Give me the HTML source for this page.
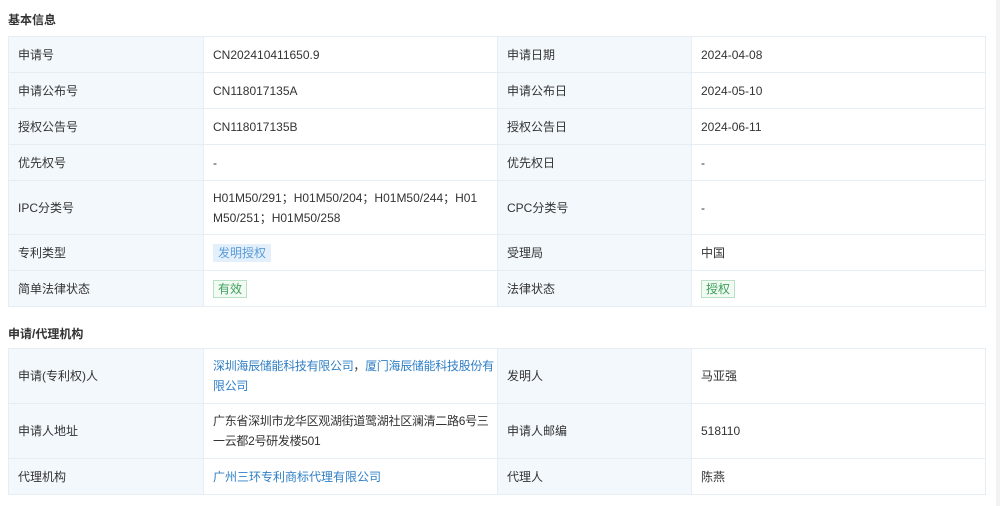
<!DOCTYPE html>
<html><head><meta charset="utf-8"><style>
body{margin:0;width:1000px;height:506px;background:#fff;font-family:"Liberation Sans","Noto Sans CJK SC",sans-serif;font-size:12px;color:#333;position:relative;overflow:hidden}
.h{position:absolute;left:8px;font-weight:bold;font-size:12px;color:#333}
table{position:absolute;left:8px;border-collapse:collapse;width:977px;table-layout:fixed}
td{border:1px solid #e6edf3;padding:0 0 0 9px;line-height:20px;vertical-align:middle;white-space:nowrap;overflow:visible}
td.l{background:#f3f8fd}
a{color:#2f7fc6;text-decoration:none}
.t1{background:#e3f0fc;color:#5b9bd6;padding:2px 5px}
.t2{border:1px solid #b9dfc4;background:#f1faf3;color:#3da05a;padding:1px 4px}
.sb{position:absolute;right:0;top:0;width:4px;height:506px;background:#f3f3f3}
.n{letter-spacing:-0.3px}
</style></head><body>
<div class="h" style="top:11px">基本信息</div>
<table style="top:36px">
<colgroup><col style="width:195px"><col style="width:294px"><col style="width:194px"><col style="width:294px"></colgroup>
<tr style="height:36px"><td class="l">申请号</td><td>CN202410411650.9</td><td class="l">申请日期</td><td>2024-04-08</td></tr>
<tr style="height:36px"><td class="l">申请公布号</td><td>CN118017135A</td><td class="l">申请公布日</td><td>2024-05-10</td></tr>
<tr style="height:36px"><td class="l">授权公告号</td><td>CN118017135B</td><td class="l">授权公告日</td><td>2024-06-11</td></tr>
<tr style="height:36px"><td class="l">优先权号</td><td>-</td><td class="l">优先权日</td><td>-</td></tr>
<tr style="height:54px"><td class="l">IPC分类号</td><td>H01M50/291；H01M50/204；H01M50/244；H01<br>M50/251；H01M50/258</td><td class="l">CPC分类号</td><td>-</td></tr>
<tr style="height:36px"><td class="l">专利类型</td><td><span class="t1">发明授权</span></td><td class="l">受理局</td><td>中国</td></tr>
<tr style="height:36px"><td class="l">简单法律状态</td><td><span class="t2">有效</span></td><td class="l">法律状态</td><td><span class="t2">授权</span></td></tr>
</table>
<div class="h" style="top:325px">申请/代理机构</div>
<table style="top:348px">
<colgroup><col style="width:195px"><col style="width:294px"><col style="width:194px"><col style="width:294px"></colgroup>
<tr style="height:55px"><td class="l">申请(专利权)人</td><td class="n"><a>深圳海辰储能科技有限公司</a>，<a>厦门海辰储能科技股份有</a><br><a>限公司</a></td><td class="l">发明人</td><td>马亚强</td></tr>
<tr style="height:55px"><td class="l">申请人地址</td><td class="n">广东省深圳市龙华区观湖街道鹭湖社区澜清二路6号三<br>一云都2号研发楼501</td><td class="l">申请人邮编</td><td>518110</td></tr>
<tr style="height:36px"><td class="l">代理机构</td><td><a>广州三环专利商标代理有限公司</a></td><td class="l">代理人</td><td>陈燕</td></tr>
</table>
<div class="sb"></div>
</body></html>
